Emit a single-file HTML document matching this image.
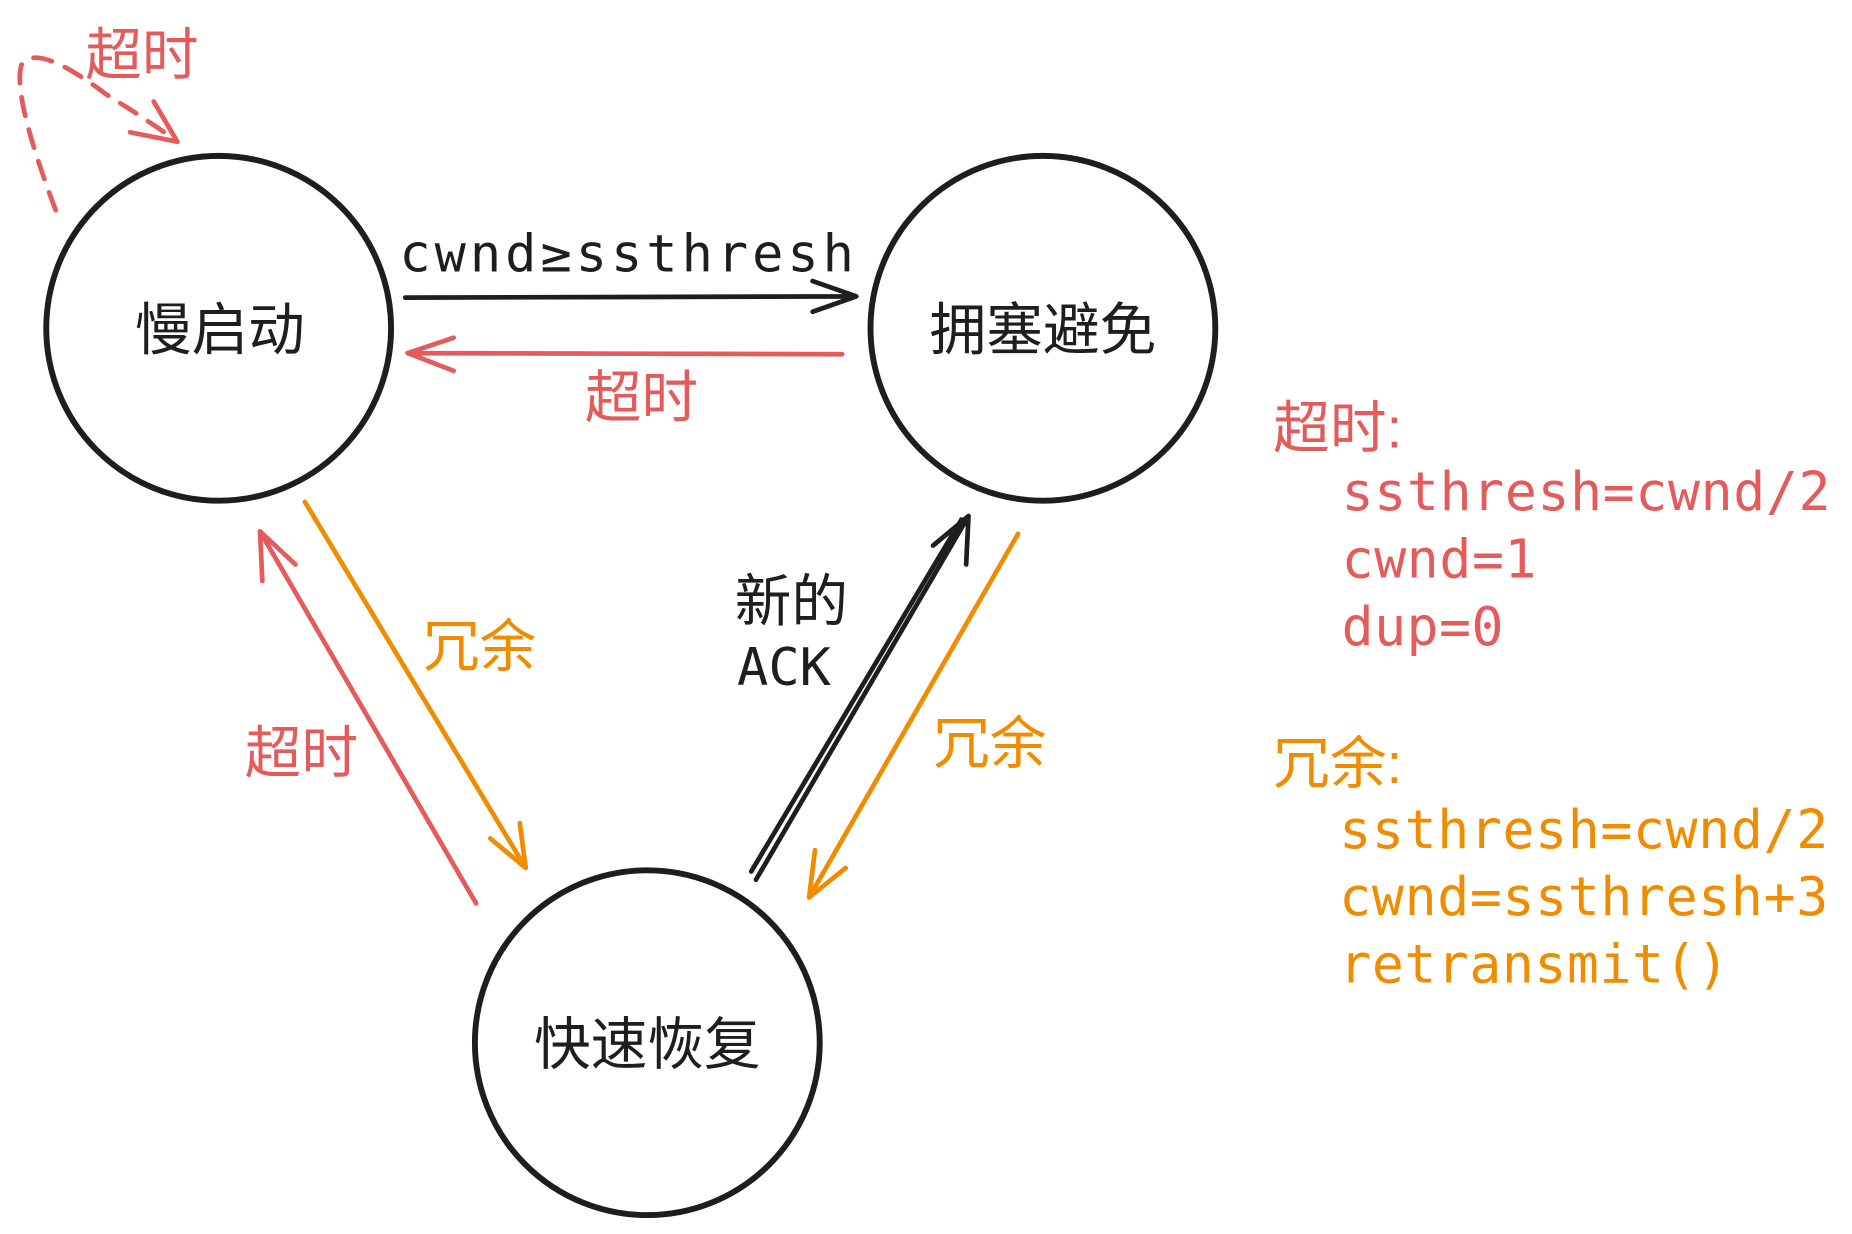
<!DOCTYPE html>
<html><head><meta charset="utf-8"><style>
html,body{margin:0;padding:0;background:#fff;}
svg{display:block}
.cjk{font-family:"Liberation Sans","Noto Sans CJK SC",sans-serif;}
.mono{font-family:"DejaVu Sans Mono","Liberation Mono","Noto Sans CJK SC",monospace;}
</style></head><body>
<svg width="1852" height="1234" viewBox="0 0 1568 1045" xmlns="http://www.w3.org/2000/svg">
<rect width="1568" height="1045" fill="#fff"/>
<g fill="none" stroke="#1e1e1e" stroke-width="5">
<circle cx="185" cy="278" r="146"/>
<circle cx="883" cy="278" r="146"/>
<circle cx="548" cy="883" r="146"/>
</g>
<g class="cjk" font-size="48" fill="#1e1e1e" text-anchor="middle">
<text x="186" y="296">慢启动</text>
<text x="883" y="296">拥塞避免</text>
<text x="548" y="901">快速恢复</text>
</g>
<text class="mono" x="338" y="230" font-size="44" fill="#1e1e1e" textLength="385">cwnd≥ssthresh</text>
<g fill="none" stroke-linecap="round" stroke-linejoin="round" stroke-width="4">
<path d="M343 252 L725 251 M725 251 L688 238 M725 251 L688 264" stroke="#1e1e1e"/>
<path d="M713 300 L345 299 M345 299 L384 286 M345 299 L384 314" stroke="#e35b5b"/>
<path d="M47 178 Q10 80 18 55 Q30 35 90 80 Q130 105 150 120" stroke="#e35b5b" stroke-dasharray="16 12"/>
<path d="M150 120 L110 112 M150 120 L130 86" stroke="#e35b5b"/>
<path d="M258 425 L445 735 M445 735 L415 710 M445 735 L440 697" stroke="#f08c00"/>
<path d="M403 765 L220 450 M220 450 L222 492 M220 450 L250 478" stroke="#e35b5b"/>
<path d="M640 745 L820 437 M636 738 L814 440 M820 437 L790 462 M820 437 L818 478" stroke="#1e1e1e"/>
<path d="M862 452 L685 760 M685 760 L716 735 M685 760 L690 720" stroke="#f08c00"/>
</g>
<g class="cjk" font-size="48">
<text x="72" y="63" fill="#e35b5b">超时</text>
<text x="495" y="353" fill="#e35b5b">超时</text>
<text x="358" y="564" fill="#f08c00">冗余</text>
<text x="207" y="654" fill="#e35b5b">超时</text>
<text x="622" y="526" fill="#1e1e1e">新的</text>
<text x="790" y="646" fill="#f08c00">冗余</text>
<text x="1078" y="379" fill="#e35b5b">超时:</text>
<text x="1078" y="663" fill="#f08c00">冗余:</text>
</g>
<text class="mono" x="624" y="580" font-size="44" fill="#1e1e1e">ACK</text>
<g class="mono" font-size="45">
<text x="1136" y="432" fill="#e35b5b" textLength="414">ssthresh=cwnd/2</text>
<text x="1136" y="489" fill="#e35b5b" textLength="165">cwnd=1</text>
<text x="1136" y="546" fill="#e35b5b" textLength="137">dup=0</text>
<text x="1134" y="718" fill="#f08c00" textLength="414">ssthresh=cwnd/2</text>
<text x="1134" y="775" fill="#f08c00" textLength="414">cwnd=ssthresh+3</text>
<text x="1134" y="832" fill="#f08c00" textLength="330">retransmit()</text>
</g>
</svg>
</body></html>
